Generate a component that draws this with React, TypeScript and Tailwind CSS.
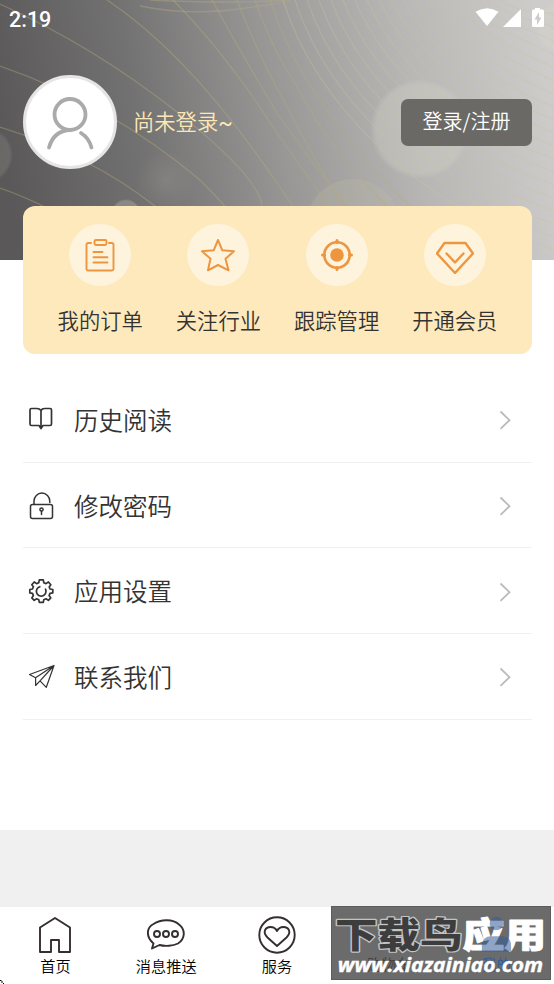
import React from "react";

const CJK = "font-['Noto_Sans_CJK_SC',sans-serif]";

const leftLines = [
  "M0 4 Q95 47 177 112 T262 206 L300 262",
  "M0 66 Q110 104 200 180 Q240 220 270 262",
  "M0 127 Q90 155 155 206 Q190 235 205 262",
  "M0 188 Q50 205 100 240",
  "M107 0 Q190 55 277 183 Q310 230 325 262",
  "M173 0 Q225 52 277 133 Q325 202 372 262",
  "M212 0 Q245 60 277 113 Q330 190 395 262",
  "M237 0 Q258 55 285 103 Q310 152 343 206",
  "M255 0 Q270 45 297 87 Q330 150 387 206",
  "M270 0 Q285 45 305 77 Q345 145 410 206",
  "M150 0 Q230 4 290 0",
  "M140 6 Q190 16 240 9 T290 0",
];

// Start on the top edge and end on the right edge of each swept curve.
const rightLines = Array.from({ length: 19 }, (_, i) => {
  const x = 283 + i * 12;
  const y = 250 - i * 13;
  const drop = 1 - i / 22;
  return `M${x} 0 C${x + 34} ${110 * drop} ${x + 34 + (554 - x) * 0.4} ${y - 42 * drop} 554 ${y}`;
});

function HeaderArt() {
  return (
    <svg className="absolute inset-0 size-full" viewBox="0 0 554 260" preserveAspectRatio="none" fill="none">
      <defs>
        <linearGradient id="metal" x1="0" y1="0.5" x2="1" y2="0.42">
          <stop offset="0" stopColor="#5a5859" />
          <stop offset="0.25" stopColor="#737272" />
          <stop offset="0.5" stopColor="#989796" />
          <stop offset="0.75" stopColor="#b8b7b6" />
          <stop offset="1" stopColor="#cdccca" />
        </linearGradient>
        <radialGradient id="glow">
          <stop offset="0" stopColor="#a09a90" stopOpacity="0.3" />
          <stop offset="1" stopColor="#a09a90" stopOpacity="0" />
        </radialGradient>
        <radialGradient id="disc">
          <stop offset="0.88" stopColor="#d4d4c8" stopOpacity="0.33" />
          <stop offset="1" stopColor="#d4d4c8" stopOpacity="0" />
        </radialGradient>
      </defs>
      <rect width="554" height="260" fill="url(#metal)" />
      <circle cx="420" cy="129" r="50" fill="url(#disc)" />
      <circle cx="353" cy="226" r="47" fill="#c5bea2" opacity="0.22" />
      <circle cx="562" cy="27" r="26" fill="url(#disc)" />
      <circle cx="-15" cy="155" r="28" fill="url(#disc)" opacity="0.4" />
      <circle cx="126" cy="214" r="15" fill="url(#disc)" opacity="0.8" />
      <circle cx="165" cy="180" r="30" fill="url(#glow)" />
      <g stroke="#b7aa7c" strokeOpacity="0.4" strokeWidth="1.3">
        {leftLines.map((d) => <path key={d} d={d} />)}
      </g>
      <g stroke="#cbc39c" strokeOpacity="0.33" strokeWidth="1.2">
        {rightLines.map((d) => <path key={d} d={d} />)}
      </g>
    </svg>
  );
}

function StatusBar() {
  return (
    <div className="relative flex h-[38px] items-center justify-between pl-[9px] pr-[9px] text-white">
      <span className="pt-px font-[Roboto,sans-serif] text-[21.500px] font-medium leading-none">2:19</span>
      <svg className="-mt-0.5" width="70" height="20" viewBox="0 0 70 20" fill="#fff">
        <path d="M.5 3.800Q12 -3.500 23.500 3.800L12 18Z" />
        <path d="M46 1V19H28Z" />
        <path fillRule="evenodd" d="M60 1.500V0h5v1.500h2.500q1.500 0 1.500 1.500v14.500q0 1.500-1.500 1.500h-9q-1.500 0-1.500-1.500V3q0-1.500 1.500-1.500zM64 4l-4.500 7.500h2.500V17l4.500-7.500H64z" />
      </svg>
    </div>
  );
}

const orders = (
  <g strokeWidth="1.900">
    <path d="M10 7H7.200Q5.500 7 5.500 8.700V33Q5.500 34.500 7 34.500H31Q32.500 34.500 32.500 33V8.700Q32.500 7 30.800 7H28" />
    <rect x="13.500" y="4" width="12" height="5" rx="1.500" />
    <path d="M12.500 16h9M12.500 21.200h14M12.500 26.500h14" />
  </g>
);
const star = <path strokeWidth="2" d="M19 4 23.300 14.300 35 15.200 26.500 22.800 29.500 34.300 19 29 9 34.300 11.500 22.800 3 15.200 14.700 14.300Z" />;
const target = (
  <g>
    <circle cx="19" cy="19" r="12.700" strokeWidth="2.600" />
    <circle cx="19" cy="19" r="6.800" fill="#ed963f" stroke="none" />
    <path strokeWidth="3" d="M19 4.500v2M19 31.500v2M4.500 19h2M31.500 19h2" />
  </g>
);
const gem = (
  <g strokeWidth="2.400">
    <path d="M8.500 7H29.500L37 17.500 19 37 1 17.500Z" />
    <path d="m10.500 17.500 8.500 9 8.500-9" />
  </g>
);

const shortcuts = [
  { label: "我的订单", icon: orders },
  { label: "关注行业", icon: star },
  { label: "跟踪管理", icon: target },
  { label: "开通会员", icon: gem },
];

const menu = [
  {
    label: "历史阅读",
    icon: (
      <path strokeWidth="1.700" d="M13 4.500Q11.500 2.500 9 2.500H3.500Q2 2.500 2 4V18Q2 19.500 3.500 19.500H11L13 22.500 15 19.500H22Q23.500 19.500 23.500 18V4Q23.500 2.500 22 2.500H16.500Q14 2.500 13 4.500ZM13 4.500V22" />
    ),
  },
  {
    label: "修改密码",
    icon: (
      <g strokeWidth="1.500">
        <rect x="2.500" y="12.500" width="22" height="14" rx="2" />
        <path d="M6 12.500V9a7.900 7.900 0 0 1 15.800 0V10.500" />
        <circle cx="13.500" cy="17.500" r="1.600" />
        <path d="M13.500 19v3.400" />
      </g>
    ),
  },
  {
    label: "应用设置",
    icon: (
      <g strokeWidth="1.700" transform="translate(-.7 -.8)">
        <path d="M11.500 5.500 12 2.700h4l.5 2.800 2.200.9L21.100 4.800 23.500 7.500 21.900 9.800l.8 2 2.800.5v3.400l-2.800.5-.9 2.200 1.700 2.300-2.400 2.500-2.400-1.600-2.200.9-.5 2.700h-4l-.5-2.700-2.200-.9-2.400 1.600-2.400-2.500 1.600-2.300-.9-2.200-2.700-.5v-3.400l2.700-.5.9-2.200L4.500 7.500 6.900 4.800l2.400 1.600Z" />
        <path d="M12.500 9.500a4.800 4.800 0 1 0 5.700 2.500" />
      </g>
    ),
  },
  {
    label: "联系我们",
    icon: (
      <path strokeWidth="1.200" d="M26 2.500 1.500 11.500 7.600 14.800V22.500L12 17.800 18.300 24.300 26 2.500 7.600 14.800M26 2.500 12 17.800" />
    ),
  },
];

function MenuRow({ label, icon }: { label: string; icon: React.ReactNode }) {
  return (
    <div className="flex h-[85.700px] items-center border-b border-[#eef1f1] pl-[5px] pr-5 pt-0.5">
      <svg width="28" height="28" viewBox="0 0 28 28" fill="none" stroke="#333" strokeLinejoin="round" strokeLinecap="round">
        {icon}
      </svg>
      <span className="ml-[18px] grow text-[24.500px] font-[350] leading-none text-[#333]">{label}</span>
      <svg width="13" height="20" viewBox="0 0 13 20" fill="none" stroke="#bbb" strokeWidth="1.800">
        <path d="m1.500 1.500 9 8.700-9 8.700" />
      </svg>
    </div>
  );
}

const tabs = [
  { label: "首页", icon: <path d="M4 12.500 19 3 34 12.500V37H23V25H15V37H4Z" /> },
  {
    label: "消息推送",
    icon: (
      <g>
        <path d="M6.500 28.500C-1 22 -1 13 6.500 9 14 4 26 4 32 9.500 39 15 38 24 31 28.500 26 31 18 31.500 12.500 30L5 33.500Z" />
        <circle cx="10" cy="19" r="3" /><circle cx="19" cy="19" r="3" /><circle cx="28" cy="19" r="3" />
      </g>
    ),
  },
  {
    label: "服务",
    icon: (
      <g>
        <circle cx="19" cy="20" r="17.700" />
        <path d="M19 31 9.500 22.500C4 17 7.500 12 12.500 12 16.500 12 18 14 19 16 20 14 21.500 12 25.500 12 30.500 12 34 17 28.500 22.500Z" />
      </g>
    ),
  },
];

function Watermark() {
  return (
    <div className="absolute -top-px left-[331px] h-[74px] w-[220px] overflow-hidden border border-[#5c5c5c] bg-[#6b6b6b]">
      <svg className="absolute inset-0 size-full" viewBox="0 0 220 74">
        <text x="34" y="65" fontSize="15" fill="#444" fontFamily="Noto Sans CJK SC">购物车</text>
        <g fontFamily="Noto Sans CJK SC, sans-serif" fontWeight="900" fontSize="36" paintOrder="stroke" strokeLinejoin="round">
          <text x="1" y="42.500" textLength="131" lengthAdjust="spacingAndGlyphs" fill="#3d3d3d" stroke="#c4c4c4" strokeWidth="2.500">下载鸟</text>
          <text x="132" y="42.500" textLength="86" lengthAdjust="spacingAndGlyphs" fill="#fff" stroke="#fff" strokeWidth="1">应用</text>
        </g>
        <g fill="#365d98" opacity="0.55">
          <circle cx="167" cy="17" r="7" />
          <path d="M152 46V40Q152 30 162 30H172Q182 30 182 40V46Z" />
        </g>
        <text x="152" y="65" fontSize="15" fill="#365d98" fontFamily="Noto Sans CJK SC">我的</text>
        <text x="4" y="67" textLength="211" lengthAdjust="spacingAndGlyphs" fontFamily="Open Sans, sans-serif" fontWeight="700" fontStyle="italic" fontSize="20" fill="#fff" stroke="#fff" strokeWidth="0.400">www.xiazainiao.com</text>
      </svg>
    </div>
  );
}

export default function App() {
  return (
    <main className={`relative flex h-[984px] w-[554px] flex-col overflow-hidden bg-white ${CJK}`}>
      <header className="relative h-[260px] shrink-0">
        <HeaderArt />
        <StatusBar />
        <div className="relative mt-[37px] flex items-center pl-[23px] pr-[22px]">
          <div className="flex size-[94px] items-center justify-center rounded-full border-[3px] border-[#e5e5e6] bg-white">
            <svg width="48" height="56" viewBox="0 0 48 56" fill="none" stroke="#aaa" strokeWidth="3.800" strokeLinecap="round">
              <circle cx="24" cy="20.500" r="15.500" />
              <path d="M3 53.500Q8 36.500 24 36M35 39Q43 44 45.500 53.500" />
            </svg>
          </div>
          <span className="ml-4 grow text-[21.300px] font-[350] leading-none text-[#fde7b5]">尚未登录<span className="font-[Roboto,sans-serif] font-normal">~</span></span>
          <button className="h-[47px] w-[131px] rounded-[7px] bg-[#6a6965] pb-0.5 text-[20px] font-[350] leading-none text-white">登录/注册</button>
        </div>
      </header>
      <section className="relative ml-[23px] mr-[22px] -mt-[54px] flex h-[148px] shrink-0 justify-center rounded-xl bg-[#fde9bb] pt-[18px]">
        {shortcuts.map((s) => (
          <div key={s.label} className="flex w-[118.200px] flex-col items-center">
            <div className="flex size-[62px] items-center justify-center rounded-full bg-[#fef3dd]">
              <svg width="38" height="38" viewBox="0 0 38 38" fill="none" stroke="#ed963f" strokeLinejoin="round" strokeLinecap="round">{s.icon}</svg>
            </div>
            <span className="mt-[23px] text-[21.300px] font-[350] leading-none text-[#333]">{s.label}</span>
          </div>
        ))}
      </section>
      <section className="ml-[23px] mr-[22px] mt-[23px] shrink-0">
        {menu.map((m) => <MenuRow key={m.label} {...m} />)}
      </section>
      <div className="mt-auto h-[77px] shrink-0 bg-[#f0f0f0]" />
      <nav className="relative flex h-[77px] shrink-0">
        {tabs.map((t) => (
          <div key={t.label} className="flex w-[110.800px] flex-col items-center pt-2">
            <svg width="38" height="40" viewBox="0 0 38 40" fill="none" stroke="#352e2e" strokeWidth="1.900" strokeLinejoin="round">{t.icon}</svg>
            <span className="mt-[3px] text-[15.200px] font-[350] leading-none text-black">{t.label}</span>
          </div>
        ))}
        <Watermark />
        <svg className="absolute bottom-0 left-0" width="5" height="5" viewBox="0 0 5 5" stroke="#000"><path d="M0 1.500h1.500M1 3h2M3 4.500h1" /></svg>
      </nav>
    </main>
  );
}
